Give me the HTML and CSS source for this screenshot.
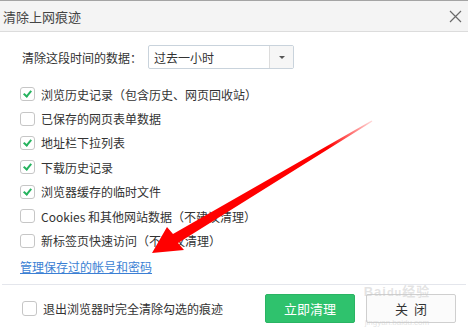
FILE: index.html
```html
<!DOCTYPE html>
<html>

<head>
    <title>清除上网痕迹</title>
    <link rel="stylesheet" href="styles.css">
</head>

<body>
    <div class="dialog">
        <div class="header">
            <span class="title">清除上网痕迹</span>
            <svg class="close" width="13" height="13" viewBox="0 0 13 13">
                <path d="M1 1 L12 12 M12 1 L1 12" stroke="#6a6a6a" stroke-width="1.2" fill="none"/>
            </svg>
        </div>

        <div class="content">
            <div class="time-row">
                <span class="time-label">清除这段时间的数据：</span>
                <div class="select">
                    <span class="select-value">过去一小时</span>
                    <span class="select-btn"><i class="caret"></i></span>
                </div>
            </div>

            <ul class="options">
                <li><span class="box checked"></span>浏览历史记录（包含历史、网页回收站）</li>
                <li><span class="box"></span>已保存的网页表单数据</li>
                <li><span class="box checked"></span>地址栏下拉列表</li>
                <li><span class="box checked"></span>下载历史记录</li>
                <li><span class="box checked"></span>浏览器缓存的临时文件</li>
                <li><span class="box"></span>Cookies 和其他网站数据（不建议清理）</li>
                <li><span class="box"></span>新标签页快速访问（不建议清理）</li>
            </ul>

            <a class="manage" href="#">管理保存过的帐号和密码</a>
        </div>

        <div class="footer">
            <label class="exit-opt"><span class="box"></span>退出浏览器时完全清除勾选的痕迹</label>
            <div class="actions">
                <button class="btn primary">立即清理</button>
                <button class="btn close-btn">关&nbsp;&nbsp;闭</button>
            </div>
        </div>

        <!-- 水印 -->
        <div class="watermark">
            <span class="wm-logo">Bai<b>du</b>经验</span>
            <span class="wm-url">jingyan.baidu.com</span>
        </div>

        <!-- 红色箭头 -->
        <svg class="arrow" width="468" height="335" viewBox="0 0 468 335">
            <defs>
                <linearGradient id="fade" x1="152" y1="253" x2="372" y2="121" gradientUnits="userSpaceOnUse">
                    <stop offset="0" stop-color="#ff0000"/>
                    <stop offset="0.8" stop-color="#ff0000"/>
                    <stop offset="1" stop-color="#ff0000" stop-opacity="0.15"/>
                </linearGradient>
            </defs>
            <polygon fill="url(#fade)"
                points="152,253 167,227 173,234 371.6,120.6 372.4,121.4 178,243 184,250"/>
        </svg>
    </div>
</body>

</html>
```

FILE: styles.css
```css
body {
    margin: 0;
    font-family: "Noto Sans CJK SC", "Liberation Sans", sans-serif;
    font-size: 12px;
    color: #333;
    background: #fff;
}

.dialog {
    position: relative;
    width: 468px;
    height: 335px;
    overflow: hidden;
    border-top: 1px solid #a4a4a4;
    box-sizing: border-box;
}

.header {
    height: 30px;
    background: #f4f4f4;
    border-bottom: 1px solid #dcdcdc;
    display: flex;
    align-items: center;
    justify-content: space-between;
    padding: 0 6px 0 3px;
}

.title {
    font-size: 13px;
    color: #444;
}

.close {
    margin-top: 1px;
}

.content {
    padding: 13px 0 0 20px;
}

.time-row {
    display: flex;
    align-items: center;
    height: 24px;
}

.time-label {
    margin-left: 2px;
    width: 126px;
}

.select {
    width: 144px;
    height: 22px;
    border: 1px solid #c9d3dc;
    border-radius: 2px;
    display: flex;
    align-items: center;
}

.select-value {
    flex: 1;
    padding-left: 5px;
}

.select-btn {
    width: 23px;
    height: 100%;
    border-left: 1px solid #dcdcdc;
    background: #f6f6f6;
    display: flex;
    align-items: center;
    justify-content: center;
}

.caret {
    width: 0;
    height: 0;
    border-left: 3px solid transparent;
    border-right: 3px solid transparent;
    border-top: 3px solid #555;
}

.options {
    list-style: none;
    margin: 13px 0 0;
    padding: 0;
}

.options li {
    height: 24.4px;
    display: flex;
    align-items: center;
}

.box {
    width: 15px;
    height: 14px;
    border: 1px solid #c6c6c6;
    border-radius: 3px;
    box-sizing: border-box;
    margin-right: 6px;
    position: relative;
    flex-shrink: 0;
    background: #fff;
}

.box.checked::after {
    content: "";
    position: absolute;
    left: 4px;
    top: 1px;
    width: 3px;
    height: 6px;
    border-right: 2px solid #27b35f;
    border-bottom: 2px solid #27b35f;
    transform: rotate(40deg);
}

.manage {
    display: inline-block;
    margin-top: 5px;
    color: #3b7fd4;
    text-decoration: underline;
}

.footer {
    margin: 9px 2px 0;
    border-top: 1px solid #e4e6ec;
    display: flex;
    align-items: center;
    justify-content: space-between;
    padding: 9px 10px 0 20px;
}

.exit-opt {
    display: flex;
    align-items: center;
}

.exit-opt .box {
    width: 15px;
    height: 15px;
}

.actions {
    display: flex;
    gap: 11px;
}

.btn {
    width: 90px;
    height: 29px;
    font-family: inherit;
    font-size: 13px;
    color: #333;
    background: #fbfbfb;
    border: 1px solid #cfcfcf;
    border-radius: 2px;
    cursor: pointer;
}

.btn.primary {
    background: #2fc26d;
    border-color: #2ab463;
    color: #fff;
}

.watermark {
    position: absolute;
    left: 352px;
    top: 284px;
    width: 90px;
    height: 42px;
    display: flex;
    flex-direction: column;
    justify-content: space-between;
    align-items: center;
    color: rgba(200, 200, 200, 0.5);
    pointer-events: none;
}

.wm-logo {
    font-family: "Liberation Sans", "Noto Sans CJK SC", sans-serif;
    font-size: 13px;
    line-height: 13px;
    font-weight: bold;
    letter-spacing: 1px;
}

.wm-logo b {
    font-size: 11px;
}

.wm-url {
    font-family: "Liberation Sans", sans-serif;
    font-size: 8px;
    line-height: 9px;
}

.arrow {
    position: absolute;
    left: 0;
    top: -1px;
    pointer-events: none;
}
```
